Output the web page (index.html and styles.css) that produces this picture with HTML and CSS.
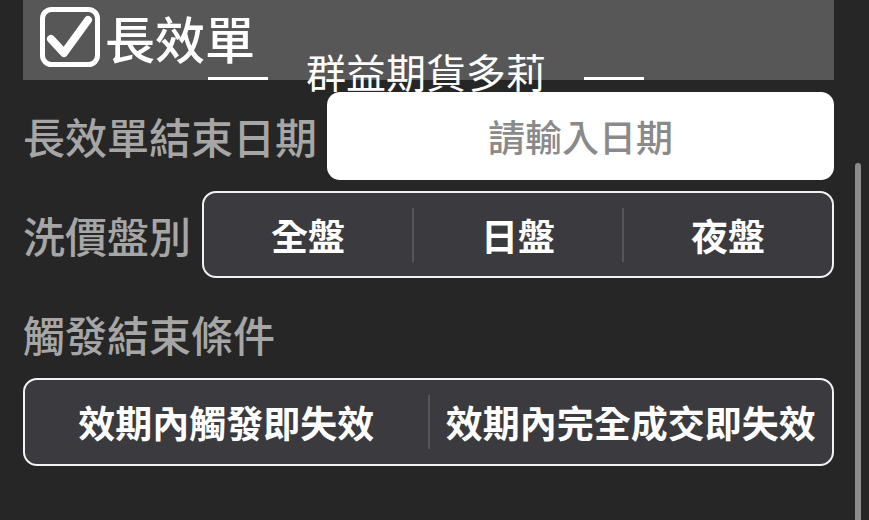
FILE: index.html
```html
<!DOCTYPE html>
<html lang="zh-Hant">
<head>
<meta charset="utf-8">
<link rel="stylesheet" href="styles.css">
</head>
<body>
<div class="page">
  <div class="header">
    <span class="checkbox">
      <svg viewBox="0 0 60 60" width="60" height="60">
        <rect x="2.5" y="2.5" width="55" height="55" rx="9" fill="none" stroke="#fff" stroke-width="5"/>
        <path d="M11 32 L24 46 L48 13" fill="none" stroke="#fff" stroke-width="8" stroke-linecap="round" stroke-linejoin="round"/>
      </svg>
    </span>
    <span class="title">長效單</span>
  </div>

  <div class="row">
    <div class="label">長效單結束日期</div>
    <div class="input">請輸入日期</div>
  </div>

  <div class="row row-seg">
    <div class="label">洗價盤別</div>
    <div class="seg seg-3">
      <div class="seg-item">全盤</div>
      <div class="seg-item">日盤</div>
      <div class="seg-item">夜盤</div>
    </div>
  </div>

  <div class="label label-block">觸發結束條件</div>
  <div class="seg seg-2">
    <div class="seg-item">效期內觸發即失效</div>
    <div class="seg-item">效期內完全成交即失效</div>
  </div>

  <div class="watermark">
    <span class="wm-line"></span>
    <span class="wm-text">群益期貨多莉</span>
    <span class="wm-line"></span>
  </div>
  <div class="scrollbar"></div>
</div>
</body>
</html>
```

FILE: styles.css
```css
html, body {
  margin: 0;
  padding: 0;
  background: #262626;
}
body {
  width: 869px;
  height: 520px;
  overflow: hidden;
  font-family: "Noto Sans CJK TC", "Noto Sans CJK SC", sans-serif;
}
.page {
  position: relative;
  width: 869px;
  height: 520px;
  box-sizing: border-box;
  padding: 0 35px 0 23px;
}
.header {
  height: 80px;
  background: #575757;
  display: flex;
  align-items: flex-start;
  padding: 7px 0 0 17px;
  box-sizing: border-box;
  gap: 5px;
}
.checkbox {
  width: 60px;
  height: 60px;
  display: block;
}
.checkbox svg { display: block; }
.title {
  color: #fff;
  font-size: 50px;
  line-height: 60px;
  font-weight: 500;
}
.row {
  display: flex;
  align-items: center;
  margin-top: 12px;
  gap: 10px;
}
.row-seg {
  margin-top: 11px;
  gap: 11px;
}
.label {
  color: #a6a6a6;
  font-size: 42px;
  font-weight: 500;
  line-height: 50px;
  white-space: nowrap;
}
.input {
  flex: 1;
  height: 88px;
  background: #fff;
  border-radius: 13px;
  display: flex;
  align-items: center;
  justify-content: center;
  color: #8a8a8a;
  font-size: 37px;
  font-weight: 500;
}
.seg {
  flex: 1;
  height: 87px;
  box-sizing: border-box;
  border: 2px solid #f2f2f2;
  border-radius: 14px;
  background: #3a3a3f;
  display: flex;
  align-items: center;
}
.seg-item {
  flex: 1;
  text-align: center;
  color: #fff;
  font-size: 37px;
  font-weight: 700;
  line-height: 54px;
  white-space: nowrap;
}
.seg-item + .seg-item {
  border-left: 2px solid #55555a;
}
.label-block {
  margin-top: 31px;
}
.seg-2 {
  margin-top: 19px;
  height: 88px;
}
.watermark {
  position: absolute;
  left: 208px;
  top: 48px;
  display: flex;
  align-items: center;
  gap: 38px;
  pointer-events: none;
}
.wm-line {
  width: 60px;
  height: 3px;
  background: #fff;
  margin-top: 14px;
}
.wm-text {
  color: #fff;
  font-size: 40px;
  font-weight: 400;
  line-height: 46px;
}
.scrollbar {
  position: absolute;
  left: 855px;
  top: 163px;
  width: 6px;
  height: 380px;
  border-radius: 3px;
  background: #8c8c8c;
}
```
